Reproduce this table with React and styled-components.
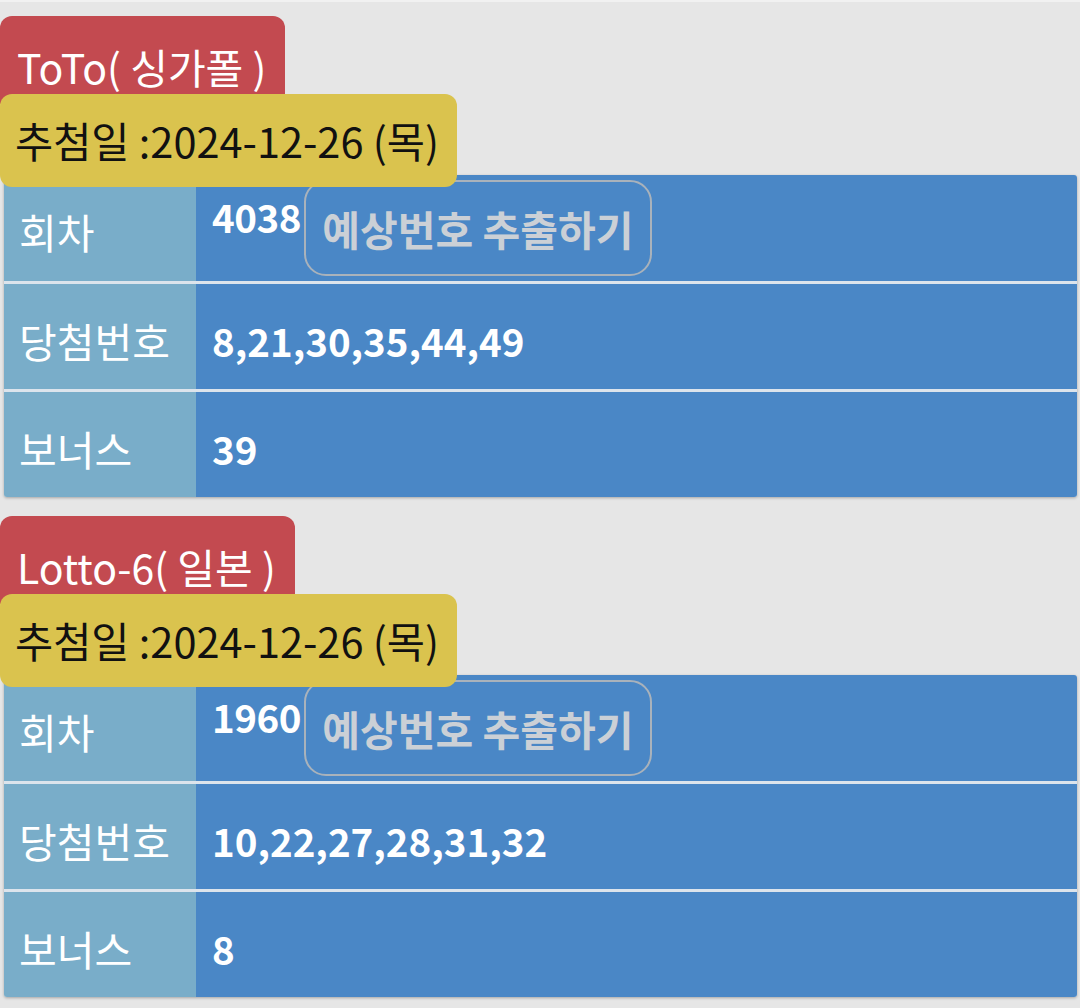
import React from "react";
import styled, { createGlobalStyle } from "styled-components";

const Global = createGlobalStyle`
  html, body { margin: 0; padding: 0; background: #e6e6e6; }
  body { font-family: "Noto Sans CJK KR", "Noto Sans", sans-serif; }
`;

const Page = styled.div`
  border-top: 2px solid #f1f1f1;
  padding-top: 14px;
  background: #e6e6e6;
  min-height: 1008px;
  box-sizing: border-box;
`;

const Card = styled.section`
  display: flex;
  flex-direction: column;
  align-items: flex-start;
  margin-bottom: 19px;
`;

const TitleTab = styled.div`
  background: #c34a50;
  color: #ffffff;
  font-size: 41px;
  height: 88px;
  line-height: 100px;
  padding: 0 19px 0 17px;
  border-radius: 12px 12px 0 0;
  box-sizing: border-box;
  white-space: nowrap;
`;

const DateBadge = styled.div`
  position: relative;
  z-index: 2;
  margin-top: -10px;
  background: #dac34e;
  color: #111;
  font-size: 41.5px;
  height: 93px;
  line-height: 93px;
  padding: 0 18px 0 15px;
  border-radius: 12px;
  box-sizing: border-box;
  white-space: nowrap;
`;

const Table = styled.div`
  position: relative;
  z-index: 1;
  align-self: stretch;
  margin: -12px 3px 0 4px;
  display: flex;
  flex-direction: column;
  border-radius: 3px;
  overflow: hidden;
  box-shadow: 0 1px 3px rgba(0, 0, 0, 0.28);
  background: #dce4ec;
`;

const Row = styled.div`
  display: grid;
  grid-template-columns: 192px 1fr;
  height: ${(p) => p.$h}px;
  & + & { margin-top: 3px; }
`;

const Label = styled.div`
  background: #79adc9;
  color: #ffffff;
  font-size: 41px;
  display: flex;
  align-items: center;
  padding: 6px 0 0 15px;
`;

const Value = styled.div`
  background: #4a87c6;
  color: #ffffff;
  font-size: 38.5px;
  font-weight: 700;
  display: flex;
  align-items: ${(p) => (p.$top ? "flex-start" : "center")};
  padding: ${(p) => (p.$top ? "5px 0 0 16px" : "6px 0 0 16px")};
`;

const Num = styled.span`
  line-height: 1;
  margin-top: 17px;
  letter-spacing: -0.5px;
`;

const PredictButton = styled.button`
  margin-left: 3px;
  height: 96px;
  width: 348px;
  background: transparent;
  border: 2px solid #a9b2bb;
  border-radius: 22px;
  color: #cbd0d6;
  font-family: inherit;
  font-size: 41px;
  font-weight: 700;
  padding: 0;
  cursor: pointer;
`;

const data = [
  {
    title: "ToTo( 싱가폴 )",
    date: "추첨일 :2024-12-26 (목)",
    round: "4038",
    numbers: "8,21,30,35,44,49",
    bonus: "39",
  },
  {
    title: "Lotto-6( 일본 )",
    date: "추첨일 :2024-12-26 (목)",
    round: "1960",
    numbers: "10,22,27,28,31,32",
    bonus: "8",
  },
];

export default function App() {
  return (
    <>
      <Global />
      <Page>
        {data.map((d) => (
          <Card key={d.title}>
            <TitleTab>{d.title}</TitleTab>
            <DateBadge>{d.date}</DateBadge>
            <Table>
              <Row $h={106}>
                <Label>회차</Label>
                <Value $top>
                  <Num>{d.round}</Num>
                  <PredictButton>예상번호 추출하기</PredictButton>
                </Value>
              </Row>
              <Row $h={105}>
                <Label>당첨번호</Label>
                <Value>{d.numbers}</Value>
              </Row>
              <Row $h={105}>
                <Label>보너스</Label>
                <Value>{d.bonus}</Value>
              </Row>
            </Table>
          </Card>
        ))}
      </Page>
    </>
  );
}
